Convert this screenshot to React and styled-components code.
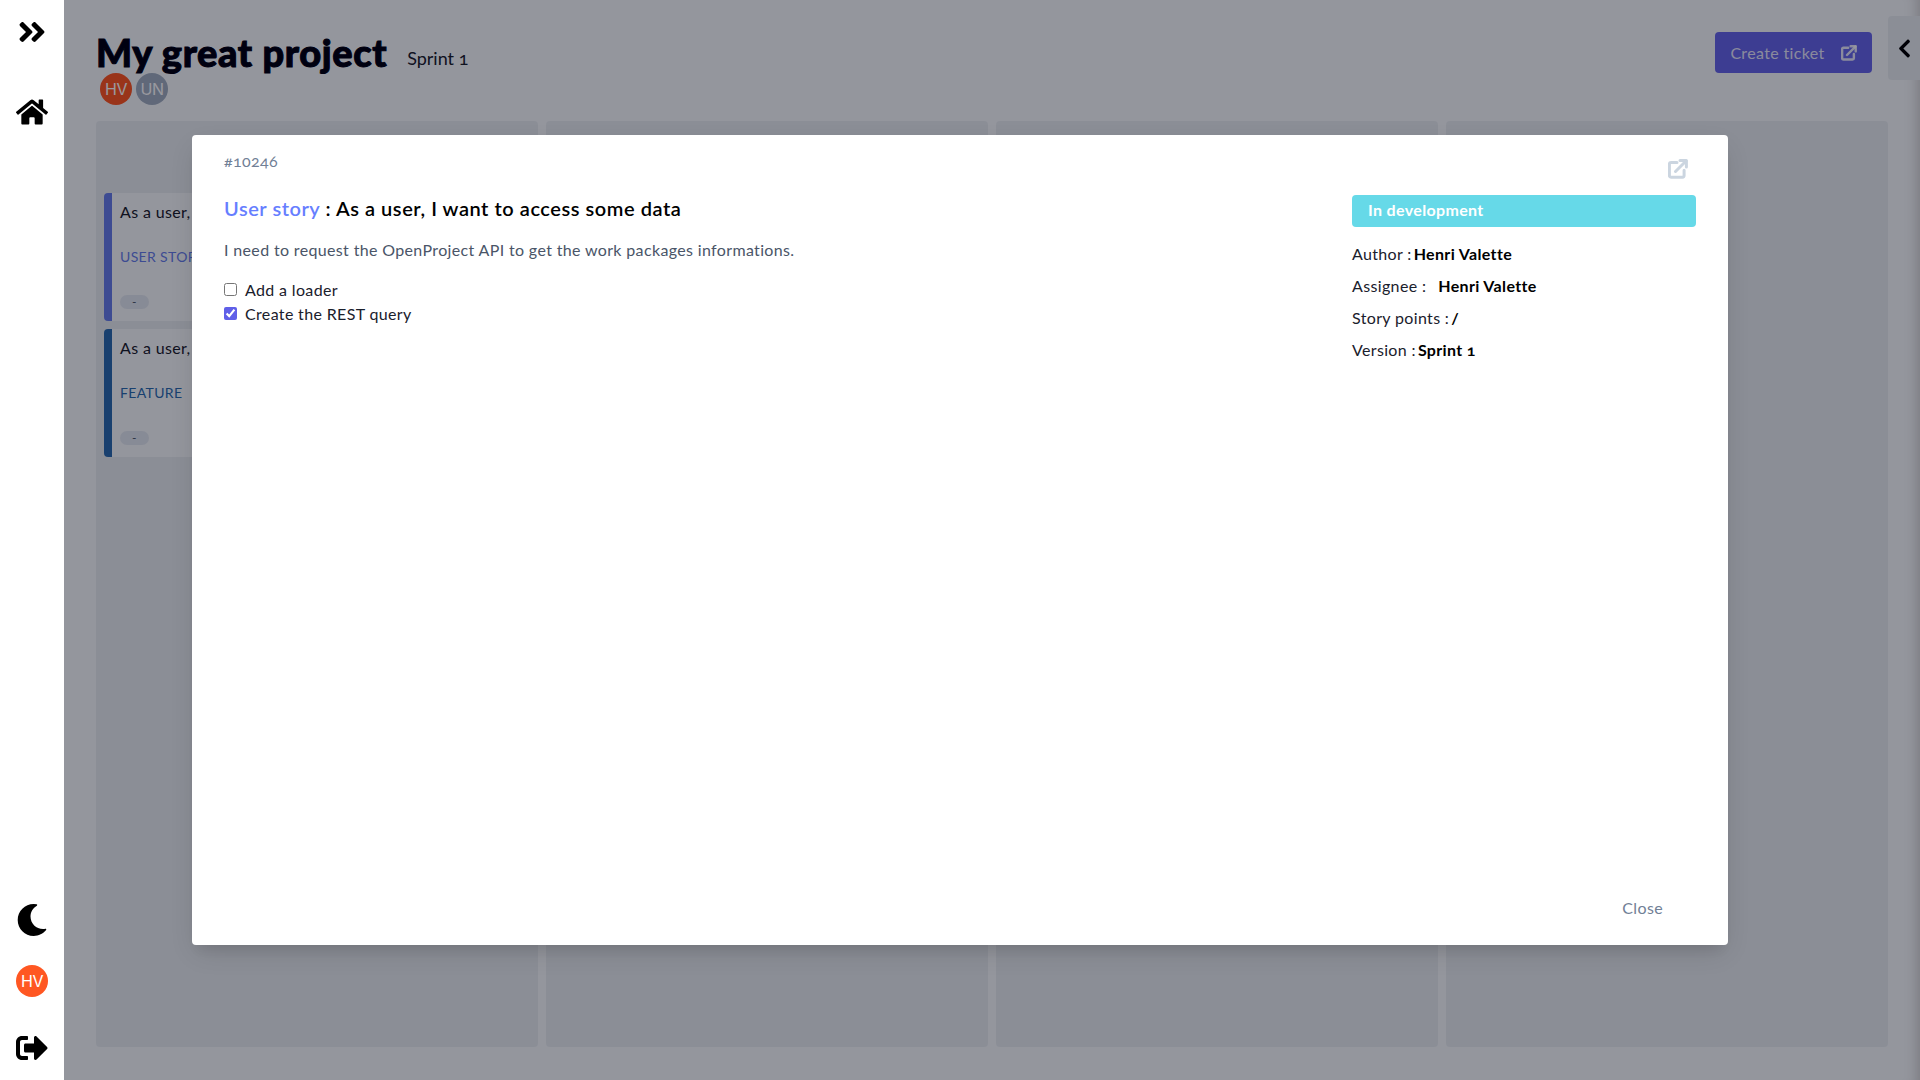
import React from "react"
import styled, { createGlobalStyle } from "styled-components"
import { FaAngleDoubleRight, FaChevronLeft, FaHome, FaMoon, FaSignOutAlt } from "react-icons/fa"

const Global = createGlobalStyle`
    html, body { margin: 0; padding: 0; height: 100%; overflow: hidden; }
    body {
        font-family: 'Lato', 'Liberation Sans', sans-serif;
        font-variant-numeric: oldstyle-nums;
        letter-spacing: 0.35px;
        background: #f7fafc;
        color: #1a202c;
    }
    * { box-sizing: border-box; }
`

function OpenIcon({ size = 20 }) {
    return (
        <svg width={size} height={size} viewBox="0 0 20 20" fill="none" stroke="currentColor" strokeWidth="3" strokeLinecap="round" strokeLinejoin="round">
            <path d="M9 3.5H3a1.6 1.6 0 0 0-1.6 1.6v11.5A1.6 1.6 0 0 0 3 18.2h11.5a1.6 1.6 0 0 0 1.6-1.6v-5.4" />
            <path d="M7.5 12.5 18 2" />
            <path d="M12 1.6h6.4V8" />
        </svg>
    )
}

function Card({ color, kind }) {
    return (
        <TicketCard $color={color}>
            <CardTitle>As a user, I want to access some data</CardTitle>
            <CardKind $color={color}>{kind}</CardKind>
            <Pill>-</Pill>
        </TicketCard>
    )
}

export default function App() {
    return (
        <Page>
            <Global />
            <Sidebar>
                <SideGroup>
                    <SideIcon $h={64}><FaAngleDoubleRight size={32} /></SideIcon>
                    <SideIcon $h={96}><FaHome size={32} /></SideIcon>
                </SideGroup>
                <SideGroup>
                    <SideIcon $h={52}><FaMoon size={32} /></SideIcon>
                    <SideIcon $h={70}><Avatar $bg="#ff5722">HV</Avatar></SideIcon>
                    <SideIcon $h={64}><FaSignOutAlt size={32} /></SideIcon>
                </SideGroup>
            </Sidebar>
            <Main>
                <Header>
                    <div>
                        <TitleRow>
                            <Title>My great project</Title>
                            <Sprint>Sprint 1</Sprint>
                        </TitleRow>
                        <Avatars>
                            <Avatar $bg="#ff5722">HV</Avatar>
                            <Avatar $bg="#a0aec0">UN</Avatar>
                        </Avatars>
                    </div>
                    <CreateButton>Create ticket <OpenIcon size={16} /></CreateButton>
                </Header>
                <Board>
                    <Column>
                        <Card color="#667eea" kind="USER STORY" />
                        <Card color="#2b6cb0" kind="FEATURE" />
                    </Column>
                    <Column />
                    <Column />
                    <Column />
                </Board>
                <PanelToggle><FaChevronLeft size={21} /></PanelToggle>
            </Main>
            <Overlay>
                <Modal>
                    <ModalHead>
                        <TicketId>#10246</TicketId>
                        <HeadIcon><OpenIcon size={20} /></HeadIcon>
                    </ModalHead>
                    <ModalBody>
                        <div>
                            <TicketTitle><span>User story</span> : As a user, I want to access some data</TicketTitle>
                            <Description>I need to request the OpenProject API to get the work packages informations.</Description>
                            <Tasks>
                                <Task><input type="checkbox" readOnly /> Add a loader</Task>
                                <Task><input type="checkbox" readOnly checked /> Create the REST query</Task>
                            </Tasks>
                        </div>
                        <Details>
                            <Status>In development</Status>
                            <Detail>Author : <b>Henri Valette</b></Detail>
                            <Detail>Assignee : <AssigneeName>Henri Valette</AssigneeName></Detail>
                            <Detail>Story points : <b>/</b></Detail>
                            <Detail>Version : <b>Sprint 1</b></Detail>
                        </Details>
                    </ModalBody>
                    <ModalFoot>
                        <CloseButton>Close</CloseButton>
                    </ModalFoot>
                </Modal>
            </Overlay>
        </Page>
    )
}

const Page = styled.div`
    display: flex;
    width: 1920px;
    height: 1080px;
    position: relative;
    overflow: hidden;
`
const Sidebar = styled.nav`
    width: 64px;
    flex-shrink: 0;
    background: #ffffff;
    display: flex;
    flex-direction: column;
    justify-content: space-between;
    position: relative;
    z-index: 20;
    color: #000000;
`
const SideGroup = styled.div`
    display: flex;
    flex-direction: column;
`
const SideIcon = styled.div`
    height: ${p => p.$h}px;
    display: flex;
    align-items: center;
    justify-content: center;
`
const Avatar = styled.div`
    width: 32px;
    height: 32px;
    border-radius: 50%;
    background: ${p => p.$bg};
    color: #ffffff;
    display: flex;
    align-items: center;
    justify-content: center;
    font-family: 'Inter', sans-serif;
    font-size: 16px;
    letter-spacing: -0.5px;
`
const Main = styled.main`
    flex: 1;
    min-width: 0;
    display: flex;
    flex-direction: column;
    padding: 32px 32px 33px 32px;
    position: relative;
    box-shadow: inset -16px 0 14px -14px rgba(60, 50, 40, 0.25);
`
const Header = styled.header`
    height: 89px;
    display: flex;
    justify-content: space-between;
    align-items: flex-start;
`
const TitleRow = styled.div`
    display: flex;
    align-items: baseline;
    gap: 20px;
    height: 41px;
`
const Title = styled.h1`
    margin: 0;
    font-size: 38px;
    line-height: 40px;
    font-weight: 900;
    color: #000011;
    letter-spacing: 0.6px;
    -webkit-text-stroke: 1px #000011;
`
const Sprint = styled.span`
    font-size: 18px;
    color: #1a202c;
    letter-spacing: 0;
    position: relative;
    top: -2px;
`
const Avatars = styled.div`
    display: flex;
    gap: 4px;
    margin-left: 4px;
`
const CreateButton = styled.button`
    margin-right: 16px;
    height: 41px;
    width: 157px;
    border: none;
    border-radius: 4px;
    background: #6667e9;
    color: rgba(255, 255, 255, 0.85);
    font-family: inherit;
    font-size: 16px;
    letter-spacing: 0.35px;
    line-height: 36px;
    display: flex;
    align-items: center;
    justify-content: center;
    gap: 16px;
`
const Board = styled.div`
    flex: 1;
    display: grid;
    grid-template-columns: repeat(4, 1fr);
    gap: 8px;
`
const Column = styled.section`
    background: #e8edf1;
    border-radius: 4px;
    padding: 72px 8px 0;
    display: flex;
    flex-direction: column;
    gap: 8px;
`
const TicketCard = styled.article`
    height: 128px;
    background: #f7fafc;
    border-left: 8px solid ${p => p.$color};
    border-radius: 4px;
    padding: 8px;
    display: flex;
    flex-direction: column;
    align-items: flex-start;
`
const CardTitle = styled.div`
    font-size: 16px;
    line-height: 22px;
`
const CardKind = styled.div`
    margin-top: 23px;
    font-size: 14px;
    line-height: 22px;
    color: ${p => p.$color};
`
const Pill = styled.div`
    margin-top: 27px;
    width: 29px;
    height: 14px;
    border-radius: 7px;
    background: #e2e8f0;
    font-size: 12px;
    line-height: 14px;
    text-align: center;
    color: #4a5568;
`
const PanelToggle = styled.button`
    position: absolute;
    top: 16px;
    right: 0;
    width: 32px;
    height: 64px;
    border: none;
    border-radius: 4px 0 0 4px;
    background: #e8edf1;
    color: #000000;
    display: flex;
    align-items: center;
    justify-content: center;
    padding: 0;
`
const Overlay = styled.div`
    position: absolute;
    inset: 0;
    z-index: 10;
    background: rgba(0, 0, 16, 0.4);
    display: flex;
    align-items: center;
    justify-content: center;
`
const Modal = styled.div`
    width: 1536px;
    height: 810px;
    background: #ffffff;
    border-radius: 4px;
    box-shadow: 0 10px 25px -5px rgba(0, 0, 0, 0.15), 0 10px 10px -5px rgba(0, 0, 0, 0.06);
    padding: 16px 32px;
    display: flex;
    flex-direction: column;
`
const ModalHead = styled.div`
    display: flex;
    justify-content: space-between;
    align-items: flex-start;
    height: 44px;
`
const TicketId = styled.div`
    font-size: 16px;
    line-height: 20px;
    color: #718096;
`
const HeadIcon = styled.div`
    color: #cbd5e0;
    margin: 8px 8px 0 0;
    display: flex;
`
const ModalBody = styled.div`
    flex: 1;
    display: grid;
    grid-template-columns: 1fr 344px;
`
const TicketTitle = styled.h2`
    margin: -1px 0 0;
    font-size: 20px;
    line-height: 28px;
    font-weight: 600;
    letter-spacing: 0.55px;
    color: #000000;
    span { color: #667eff; }
`
const Description = styled.p`
    margin: 16px 0 0;
    font-size: 16px;
    line-height: 24px;
    color: #4a5568;
`
const Tasks = styled.div`
    margin-top: 15px;
    display: flex;
    flex-direction: column;
`
const Task = styled.label`
    height: 24px;
    display: flex;
    align-items: center;
    gap: 8px;
    font-size: 16px;
    color: #1a202c;
    input {
        margin: 0;
        width: 13px;
        height: 13px;
        accent-color: #5f5fe8;
    }
`
const Details = styled.aside`
    display: flex;
    flex-direction: column;
`
const Status = styled.div`
    height: 32px;
    margin-bottom: 10px;
    padding-left: 16px;
    border-radius: 4px;
    background: #66d9e8;
    color: #ffffff;
    font-size: 16px;
    font-weight: 700;
    line-height: 30px;
`
const Detail = styled.div`
    height: 32px;
    display: flex;
    align-items: center;
    gap: 2px;
    font-size: 16px;
    color: #1a202c;
    b { color: #000000; font-weight: 700; }
`
const AssigneeName = styled.b`
    margin-left: 10px;
`
const ModalFoot = styled.div`
    display: flex;
    justify-content: flex-end;
`
const CloseButton = styled.button`
    border: none;
    background: none;
    padding: 8px 2px;
    margin: 0 31px 2px 0;
    font-family: inherit;
    font-size: 16px;
    letter-spacing: 0.35px;
    line-height: 22px;
    color: #718096;
`
